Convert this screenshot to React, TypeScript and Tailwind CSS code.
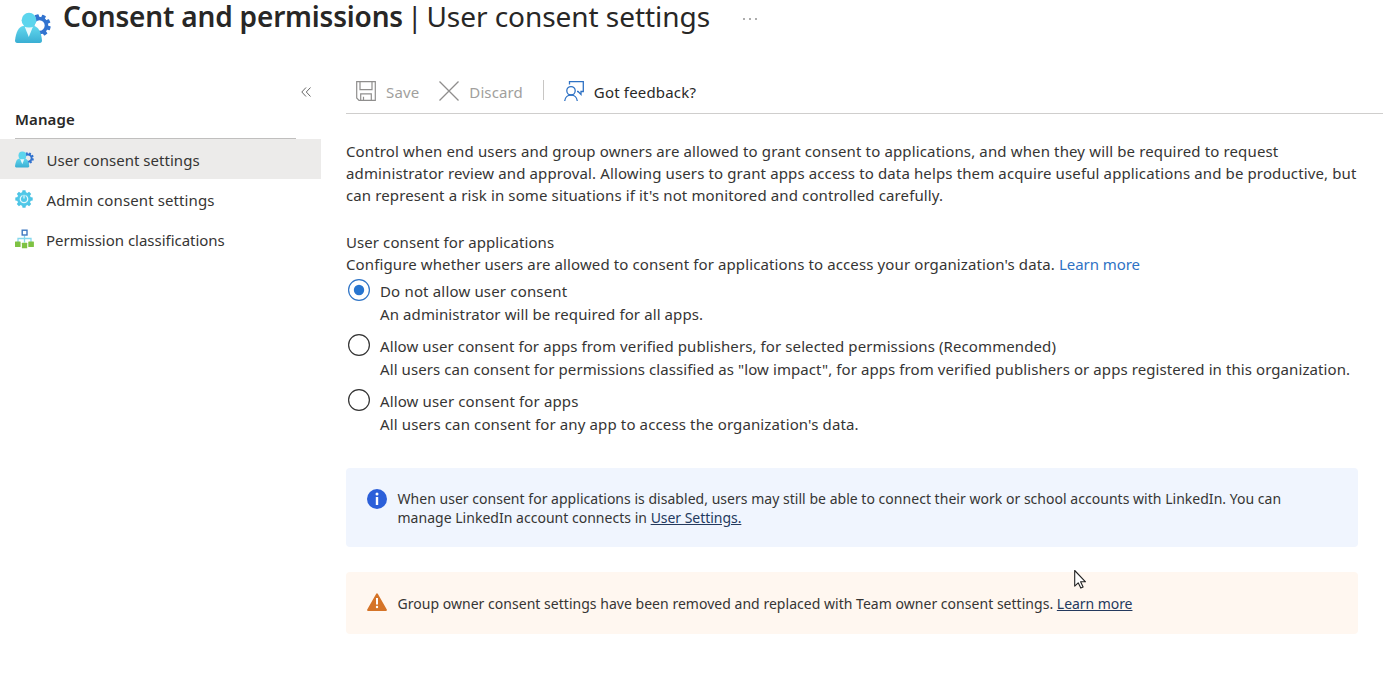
import React, { type ReactNode } from "react";

function UserGearIcon({ className }: { className: string }) {
  return (
    <svg viewBox="0 0 36 32" className={className} aria-hidden="true">
      <defs>
        <linearGradient id="person" x1="0" y1="0" x2="0" y2="1">
          <stop offset="0" stopColor="#62d8ee" />
          <stop offset="1" stopColor="#3aaed3" />
        </linearGradient>
      </defs>
      <g transform="translate(24.5 13.5)">
        <circle r="7" fill="none" stroke="#3273cf" strokeWidth="3.6" />
        {[-105, -65, -25, 15, 55, 95].map((a) => (
          <rect key={a} x="7.6" y="-2" width="3.6" height="4" rx=".6" fill="#3273cf" transform={`rotate(${a})`} />
        ))}
      </g>
      <path d="M0 28.500C1 20 3.500 15 8 14h11c4.500 1 7.200 6 8 14.500 0 1.500-.8 2.500-2.200 2.500H2.200C.8 31 0 30 0 28.500z" fill="url(#person)" />
      <path d="M9.700 14.800h8.200L13.800 25z" fill="#eafafd" />
      <circle cx="14" cy="8.200" r="7.400" fill="#5cd5ed" />
    </svg>
  );
}

function GearIcon() {
  return (
    <svg viewBox="0 0 18 18" className="size-[18px]" aria-hidden="true">
      {[0, 45, 90, 135, 180, 225, 270, 315].map((a) => (
        <path key={a} d="M7 3.200L7.500.3h3l.5 2.900z" fill="#4cc3e4" transform={`rotate(${a} 9 9)`} />
      ))}
      <circle cx="9" cy="9" r="6.900" fill="#50c8e8" />
      <circle cx="9" cy="9" r="3.700" fill="none" stroke="#e2f7fc" strokeWidth="1.300" />
      <path d="M9 4.500v4.300" stroke="#50c8e8" strokeWidth="3" />
      <path d="M9 5v3.400" stroke="#e2f7fc" strokeWidth="1.200" />
    </svg>
  );
}

function HierarchyIcon() {
  return (
    <svg viewBox="0 0 19 20" className="h-5 w-[19px]" aria-hidden="true">
      <path d="M9.500 6.500v7M3 13.500V9.500h13v4" fill="none" stroke="#86d8ec" strokeWidth="1.300" />
      <rect x="7.200" y="1.200" width="4.800" height="4.800" fill="#fff" stroke="#3f78c0" strokeWidth="1.400" />
      <g fill="#7ec243">
        <rect x="0" y="12.500" width="5.600" height="5.500" rx=".5" />
        <rect x="6.900" y="13.800" width="5.300" height="5.500" rx=".5" />
        <rect x="13.300" y="12.500" width="5.600" height="5.500" rx=".5" />
      </g>
    </svg>
  );
}

const Line = ({ children, className }: { children: ReactNode; className: string }) => (
  <span className={`block w-max whitespace-pre ${className}`}>{children}</span>
);

function Radio({ checked }: { checked?: boolean }) {
  return (
    <svg viewBox="0 0 22 22" className="-mt-px size-[22px] shrink-0" role="radio" aria-checked={!!checked}>
      <circle cx="11" cy="11" r="10.400" fill="#fff" stroke={checked ? "#2f74c6" : "#333"} strokeWidth="1.200" />
      {checked && <circle cx="11" cy="11" r="5.200" fill="#2775d0" />}
    </svg>
  );
}

export default function App() {
  return (
    <div className="relative h-[685px] w-[1383px] overflow-hidden bg-white font-['Noto_Sans',sans-serif] text-[15px] leading-[22px] text-[#363534]">
      <header className="flex h-[65px] pl-[15px]">
        <UserGearIcon className="mt-3 h-8 w-9" />
        <h1 className="ml-3 flex h-8 text-[28px] leading-8 text-[#282726]">
          <Line className="font-semibold tracking-[-0.18px]">Consent and permissions</Line>
          <span className="mx-1">|</span>
          <Line className="tracking-[-0.05px]">User consent settings</Line>
        </h1>
        <svg viewBox="0 0 14 4" className="mt-[17px] ml-[33px] h-1 w-3.5" fill="#444"><circle cx="1" cy="2" r=".8" /><circle cx="7" cy="2" r=".8" /><circle cx="13" cy="2" r=".8" /></svg>
      </header>
      <div className="flex">
        <aside className="w-[346px]">
          <svg viewBox="0 0 10 10" className="mt-[22px] ml-[301px] size-2.5" fill="none" stroke="#666" strokeWidth="1"><path d="M5 .5L.8 5 5 9.500M9.500.5L5.300 5l4.200 4.500" /></svg>
          <div className="mt-[11px] ml-[15px] h-[31px] w-[281px] border-b border-[#c0bfbe] font-semibold text-[#292827]"><Line className="tracking-[0.1px]">Manage</Line></div>
          <nav className="w-[321px]">
            <div className="flex h-10 items-center bg-[#ecebea] pl-[15px]"><UserGearIcon className="h-[17px] w-[19px]" /><Line className="ml-[12.5px] pt-0.5 tracking-[0.03px]">User consent settings</Line></div>
            <div className="flex h-10 items-center pl-[15px]"><GearIcon /><Line className="ml-[13.5px] pt-0.5 tracking-[0.11px]">Admin consent settings</Line></div>
            <div className="flex h-10 items-center pl-[15px]"><HierarchyIcon /><Line className="ml-3 pt-0.5 tracking-[-0.02px]">Permission classifications</Line></div>
          </nav>
        </aside>
        <main className="w-[1037px]">
          <div className="flex h-[49px] items-center border-b border-[#cfcecd] pt-[5px] pl-[10px] text-[#a19f9d]">
            <svg viewBox="0 0 20 20" className="mb-0.5 size-5" fill="none" stroke="#8f8e8d" strokeWidth="1.200"><path d="M.7.7h18.600v18.600H3L.7 17zM4 .7v8h12v-8M4.700 19.300v-6.500h10.600v6.500M7.500 19v-3.300" /></svg>
            <Line className="ml-[10px] tracking-[0.15px]">Save</Line>
            <svg viewBox="0 0 20 20" className="mb-0.5 ml-[19.5px] size-5" stroke="#8f8e8d" strokeWidth="1.300"><path d="M.5.5l19 19M19.500.5l-19 19" /></svg>
            <Line className="ml-[10.5px] tracking-[0.1px]">Discard</Line>
            <div className="mb-[3px] ml-5 h-5 w-px bg-[#c8c6c4]" />
            <svg viewBox="0 0 20 20" className="mb-0.5 ml-5 size-5" fill="none" stroke="#2f72c4" strokeWidth="1.300"><circle cx="7" cy="9.800" r="4.200" /><path d="M.7 20c.3-3.600 3-6 6.300-6s6 2.400 6.300 6M5.500 3.500V.7h13.800v9.800H17v3l-3-3h-1" /></svg>
            <Line className="ml-[10px] tracking-[0.18px] text-[#292827]">Got feedback?</Line>
          </div>
          <div className="pt-[26px]">
            <Line className="tracking-[0.14px]">Control when end users and group owners are allowed to grant consent to applications, and when they will be required to request</Line>
            <Line className="tracking-[0.128px]">administrator review and approval. Allowing users to grant apps access to data helps them acquire useful applications and be productive, but</Line>
            <Line className="tracking-[0.12px]">can represent a risk in some situations if it's not monitored and controlled carefully.</Line>
          </div>
          <div className="pt-[25px]">
            <Line className="tracking-[0.08px]">User consent for applications</Line>
            <div className="flex"><Line className="tracking-[0.117px]">Configure whether users are allowed to consent for applications to access your organization's data.</Line><Line className="ml-1 tracking-[-0.05px] text-[#2f72c4]">Learn more</Line></div>
          </div>
          <div className="flex flex-col pt-[5px] pl-0.5">
            <div className="flex h-[55px] gap-[10px]"><Radio checked /><div className="leading-[23px]"><Line className="tracking-[0.17px]">Do not allow user consent</Line><Line className="tracking-[0.1px]">An administrator will be required for all apps.</Line></div></div>
            <div className="flex h-[55px] gap-[10px]"><Radio /><div className="leading-[23px]"><Line className="tracking-[0.097px]">Allow user consent for apps from verified publishers, for selected permissions (Recommended)</Line><Line className="tracking-[0.086px]">All users can consent for permissions classified as "low impact", for apps from verified publishers or apps registered in this organization.</Line></div></div>
            <div className="flex h-[55px] gap-[10px]"><Radio /><div className="leading-[23px]"><Line className="tracking-[0.13px]">Allow user consent for apps</Line><Line className="tracking-[0.133px]">All users can consent for any app to access the organization's data.</Line></div></div>
          </div>
          <div className="mt-[23px] flex h-[79px] w-[1012px] rounded-sm bg-[#f0f5fe] pt-[21px] pl-[21px] text-[14px] leading-[19px]">
            <svg viewBox="0 0 20 20" className="size-5"><circle cx="10" cy="10" r="10" fill="#2b5fd9" /><circle cx="10" cy="5" r="1.500" fill="#fff" /><path d="M10 8v8" stroke="#fff" strokeWidth="2.400" /></svg>
            <div className="ml-[10.5px]">
              <Line className="tracking-[0.026px]">When user consent for applications is disabled, users may still be able to connect their work or school accounts with LinkedIn. You can</Line>
              <div className="flex"><Line className="tracking-[0.02px]">manage LinkedIn account connects in </Line><Line className="tracking-[-0.04px] text-[#243a5e] underline">User Settings.</Line></div>
            </div>
          </div>
          <div className="mt-[25px] flex h-[62px] w-[1012px] rounded-sm bg-[#fff7f0] pt-[21px] pl-[21px] text-[14px] leading-[19px]">
            <svg viewBox="0 0 20 18" className="h-[18px] w-5"><path d="M10 1.200L19 17H1z" fill="#d57428" stroke="#d57428" strokeWidth="1.800" strokeLinejoin="round" /><path d="M10 5v6.500" stroke="#fff" strokeWidth="2" /><circle cx="10" cy="14" r="1.200" fill="#fff" /></svg>
            <div className="ml-[10.5px] flex pt-px"><Line className="tracking-[0.028px]">Group owner consent settings have been removed and replaced with Team owner consent settings. </Line><Line className="tracking-[-0.05px] text-[#243a5e] underline">Learn more</Line></div>
          </div>
        </main>
      </div>
      <svg viewBox="0 0 13 20" className="absolute top-[569px] left-[1074px] h-5 w-[13px]" aria-hidden="true">
        <path d="M.7 1.500v15.600l3.500-3.300 2.600 5.300 2.300-1.100-2.500-5.200h4.900z" fill="#fff" stroke="#222" strokeWidth="1.100" strokeLinejoin="round" />
      </svg>
    </div>
  );
}
